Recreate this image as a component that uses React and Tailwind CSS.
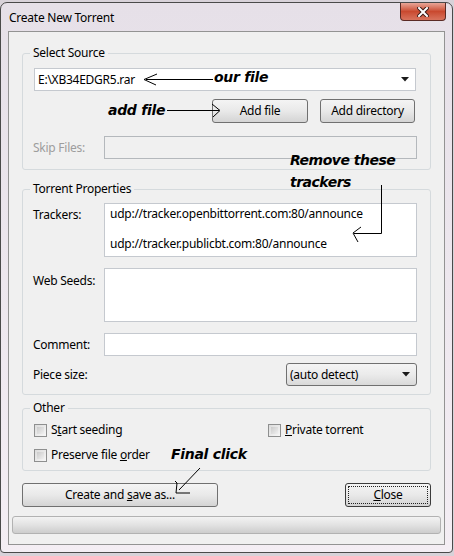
import React from "react";

const ui = { fontFamily: '"Noto Sans", "Open Sans", sans-serif' };
const note = { fontFamily: '"DejaVu Sans", Verdana, sans-serif' };

const Button = ({ className = "", children, focused }) => (
  <div
    className={`relative flex items-center justify-center h-[24px] rounded-[3px] border ${
      focused ? "border-[#3c3c3c]" : "border-[#707070]"
    } bg-linear-to-b from-[#f4f4f4] via-[#e9e9e9] to-[#d4d4d4] text-[12px] text-black ${className}`}
  >
    {focused && (
      <div className="absolute inset-[2px] border border-dotted border-[#222]" />
    )}
    <span className="relative">{children}</span>
  </div>
);

const Arrow = () => (
  <svg width="8" height="5" viewBox="0 0 8 5" className="shrink-0">
    <path d="M0 0 L8 0 L4 4.5 Z" fill="#1a1a1a" />
  </svg>
);

const Check = ({ children }) => (
  <div className="flex items-center h-[16px]">
    <div className="w-[13px] h-[13px] border border-[#8e8f8f] bg-linear-to-br from-[#dcdcdc] to-[#f7f7f7] p-[2px]">
      <div className="w-full h-full bg-linear-to-br from-[#cbcbcb] to-[#f0f0f0]" />
    </div>
    <span className="ml-[4px] text-[12px]">{children}</span>
  </div>
);

const Group = ({ title, className = "", children }) => (
  <fieldset
    className={`mx-[13px] border border-[#d5dadd] rounded-[3px] pl-[11px] pr-[14px] ${className}`}
  >
    <legend className="-ml-[4px] px-[3px] text-[12px] leading-[16px]">{title}</legend>
    {children}
  </fieldset>
);

export default function App() {
  return (
    <div
      className="relative w-[454px] h-[556px] bg-[#d8d2d9] overflow-hidden tracking-[-0.25px]"
      style={ui}
    >
      <div className="mt-[2px] w-[453px] h-[551px] rounded-t-[7px] rounded-b-[4px] border border-[#4a4a4a] bg-linear-to-b from-[#e6e0e8] to-[#f4eef4] px-[7px]">
        <div className="flex justify-between items-start h-[28px]">
          <span className="mt-[6px] ml-[1px] text-[12px] text-black">Create New Torrent</span>
          <div className="mr-[-1px] w-[46px] h-[18px] rounded-b-[4px] border border-t-0 border-[#5a2a24] bg-linear-to-b from-[#e8a597] via-[#c9492f] to-[#d8735d] flex items-center justify-center">
            <svg width="12" height="10" viewBox="0 0 12 10">
              <path
                d="M2 1 L10 9 M10 1 L2 9"
                stroke="#3b1a16"
                strokeWidth="4"
                strokeLinecap="square"
              />
              <path
                d="M2 1 L10 9 M10 1 L2 9"
                stroke="#ffffff"
                strokeWidth="2"
                strokeLinecap="square"
              />
            </svg>
          </div>
        </div>
        <div className="border border-[#939393] bg-[#f0f0f0] h-[514px] pt-[13px]">
          <Group title="Select Source" className="pb-[10px]">
            <div className="mt-[7px] h-[23px] bg-white border border-[#c5c9cf] flex items-center justify-between pl-[3px] pr-[6px] text-[12px]">
              <span>E:\XB34EDGR5.rar</span>
              <Arrow />
            </div>
            <div className="mt-[8px] flex justify-end gap-[12px] pr-[1px]">
              <Button className="w-[96px]">Add file</Button>
              <Button className="w-[95px]">Add directory</Button>
            </div>
            <div className="mt-[13px] flex items-center">
              <span className="w-[71px] -ml-[1px] text-[12px] text-[#9d9d9d]">Skip Files:</span>
              <div className="flex-1 h-[23px] -mr-[1px] border border-[#b4b8bc] bg-[#f0f0f0]" />
            </div>
          </Group>

          <Group title="Torrent Properties" className="mt-[11px] pb-[8px]">
            <div className="mt-[6px] flex items-start">
              <span className="w-[71px] -ml-[1px] mt-[3px] text-[12px]">Trackers:</span>
              <div className="flex-1 -mr-[1px] h-[54px] bg-white border border-[#c5c9cf] pl-[5px] pt-[2px] text-[12px] leading-[15px]">
                <div>udp://tracker.openbittorrent.com:80/announce</div>
                <div className="h-[15px]" />
                <div>udp://tracker.publicbt.com:80/announce</div>
              </div>
            </div>
            <div className="mt-[11px] flex items-start">
              <span className="w-[71px] -ml-[1px] mt-[4px] text-[12px]">Web Seeds:</span>
              <div className="flex-1 -mr-[1px] h-[54px] bg-white border border-[#c5c9cf]" />
            </div>
            <div className="mt-[11px] flex items-center">
              <span className="w-[71px] -ml-[1px] text-[12px]">Comment:</span>
              <div className="flex-1 -mr-[1px] h-[23px] bg-white border border-[#c5c9cf]" />
            </div>
            <div className="mt-[7px] flex items-center justify-between">
              <span className="-ml-[1px] text-[12px]">Piece size:</span>
              <div className="w-[131px] -mr-[1px] h-[23px] rounded-[3px] border border-[#707070] bg-linear-to-b from-[#f4f4f4] via-[#ebebeb] to-[#d9d9d9] flex items-center justify-between pl-[3px] pr-[6px] text-[12px]">
                <span>(auto detect)</span>
                <Arrow />
              </div>
            </div>
          </Group>

          <Group title="Other" className="mt-[5px] pb-[7px]">
            <div className="mt-[6px] flex">
              <div className="w-[234px]">
                <Check>
                  S<span className="underline">t</span>art seeding
                </Check>
              </div>
              <Check>
                <span className="underline">P</span>rivate torrent
              </Check>
            </div>
            <div className="mt-[9px]">
              <Check>
                Preserve file <span className="underline">o</span>rder
              </Check>
            </div>
          </Group>

          <div className="mt-[12px] flex justify-between pl-[13px] pr-[13px]">
            <Button className="w-[196px]">
              Create and <span className="underline">s</span>ave as...
            </Button>
            <Button className="w-[86px]" focused>
              <span className="underline">C</span>lose
            </Button>
          </div>

          <div className="mt-[9px] mx-[3px] h-[18px] rounded-[3px] border border-[#b2b2b2] bg-linear-to-b from-[#f3f3f3] via-[#e2e2e2] to-[#cdcdcd]" />
        </div>
      </div>

      {/* annotations */}
      <svg
        className="absolute inset-0 pointer-events-none"
        width="454"
        height="556"
        viewBox="0 0 454 556"
      >
        <g stroke="#000" strokeWidth="1" fill="none">
          <path d="M213 79.5 H146" />
          <path d="M157 74 L144 79.5 L156 85" />
          <path d="M167 110.5 H219" />
          <path d="M212 104 L220 110.5 L213 117" />
          <path d="M381.5 185 V233.5 H354" />
          <path d="M361 227 L353 233 L358 242" />
          <path d="M200 468 L179 490" />
          <path d="M175 481 L177 483 L176 493 H190" />
        </g>
      </svg>
      <span className="absolute left-[214px] top-[68px] text-[14px] font-bold italic leading-[18px] tracking-[-0.3px]" style={note}>
        our file
      </span>
      <span className="absolute left-[108px] top-[101px] text-[14px] font-bold italic leading-[18px] tracking-[-0.3px]" style={note}>
        add file
      </span>
      <span className="absolute left-[290px] top-[149px] text-[14px] font-bold italic leading-[22px] tracking-[-0.5px]" style={note}>
        Remove these
        <br />
        trackers
      </span>
      <span className="absolute left-[171px] top-[445px] text-[14px] font-bold italic leading-[18px] tracking-[-0.3px]" style={note}>
        Final click
      </span>
    </div>
  );
}
